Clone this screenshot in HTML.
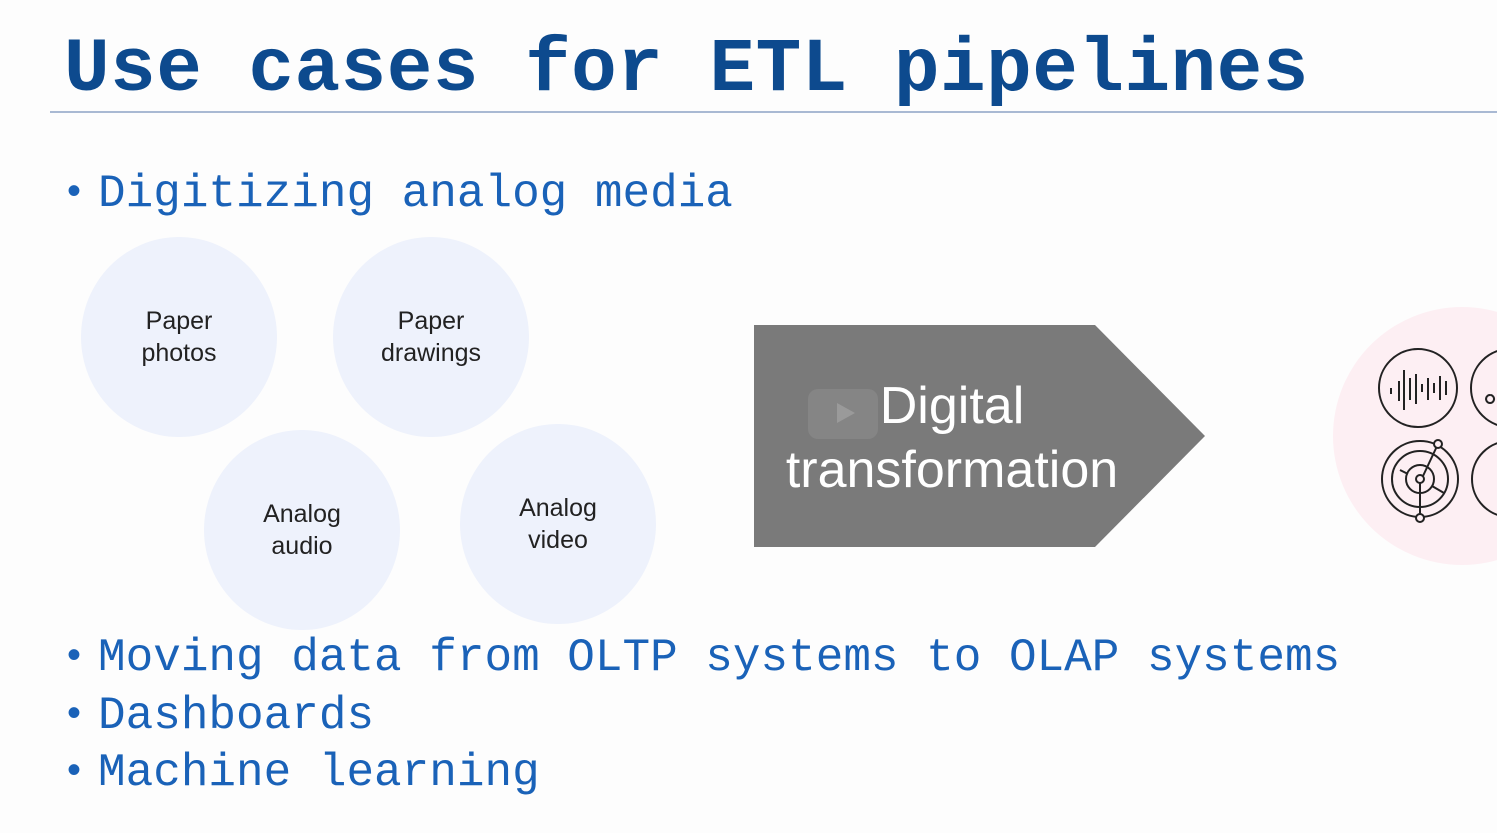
<!DOCTYPE html>
<html><head><meta charset="utf-8"><style>
body{margin:0;width:1497px;height:833px;background:#fdfdfd;position:relative;overflow:hidden;font-family:"Liberation Sans",sans-serif}
.t{position:absolute;left:64px;top:27px;font:bold 76px "Liberation Mono",monospace;color:#0d4a8e;white-space:nowrap;letter-spacing:0.5px}
.rule{position:absolute;left:50px;right:0;top:111px;height:2px;background:#a9b9d3}
.b{position:absolute;left:62px;font:46px "Liberation Mono",monospace;color:#1a62b8;white-space:nowrap}
.b span{display:inline-block;width:36px;font-size:40px;vertical-align:2px}
.c{position:absolute;width:196px;height:200px;border-radius:50%;background:#eef2fc;display:flex;align-items:center;justify-content:center;text-align:center;font-size:25px;line-height:32px;color:#222}
</style></head><body>
<div class="t">Use cases for ETL pipelines</div>
<div class="rule"></div>
<div class="b" style="top:168px"><span>•</span>Digitizing analog media</div>
<div class="b" style="top:632px"><span>•</span>Moving data from OLTP systems to OLAP systems</div>
<div class="b" style="top:690px"><span>•</span>Dashboards</div>
<div class="b" style="top:747px"><span>•</span>Machine learning</div>
<div class="c" style="left:81px;top:237px">Paper<br>photos</div>
<div class="c" style="left:333px;top:237px">Paper<br>drawings</div>
<div class="c" style="left:204px;top:430px">Analog<br>audio</div>
<div class="c" style="left:460px;top:424px">Analog<br>video</div>
<svg style="position:absolute;left:0;top:0" width="1497" height="833">
<polygon points="754,325 1095,325 1205,436 1095,547 754,547" fill="#7a7a7a"/>
<rect x="808" y="389" width="70" height="50" rx="10" fill="#858585"/>
<polygon points="837,403 837,423 855,413" fill="#9a9a9a"/>
<text x="952" y="423" text-anchor="middle" fill="#fff" font-family="Liberation Sans,sans-serif" font-size="52">Digital</text>
<text x="952" y="487" text-anchor="middle" fill="#fff" font-family="Liberation Sans,sans-serif" font-size="52">transformation</text>
<circle cx="1462" cy="436" r="129" fill="#fdeff3"/>
<g fill="none" stroke="#222" stroke-width="2">
<circle cx="1418" cy="388" r="39"/>
<path d="M1391 388v6M1399 381v20M1404 370v40M1410 378v22M1416 374v30M1422 384v8M1428 378v22M1434 383v10M1440 376v24M1446 381v14"/>
<circle cx="1510" cy="388" r="39"/>
<circle cx="1420" cy="479" r="38"/>
<circle cx="1420" cy="479" r="28"/>
<circle cx="1420" cy="479" r="14"/>
<circle cx="1420" cy="479" r="4"/>
<path d="M1420 483v35M1423 476l15-32M1400 470l8 4M1432 486l12 7"/>
<circle cx="1438" cy="444" r="4" fill="#fdeff3"/>
<circle cx="1420" cy="518" r="4" fill="#fdeff3"/>
<circle cx="1510" cy="479" r="38"/>
<path d="M1490 395a4 4 0 1 0 0.1 0"/>
</g>
</svg>
</body></html>
